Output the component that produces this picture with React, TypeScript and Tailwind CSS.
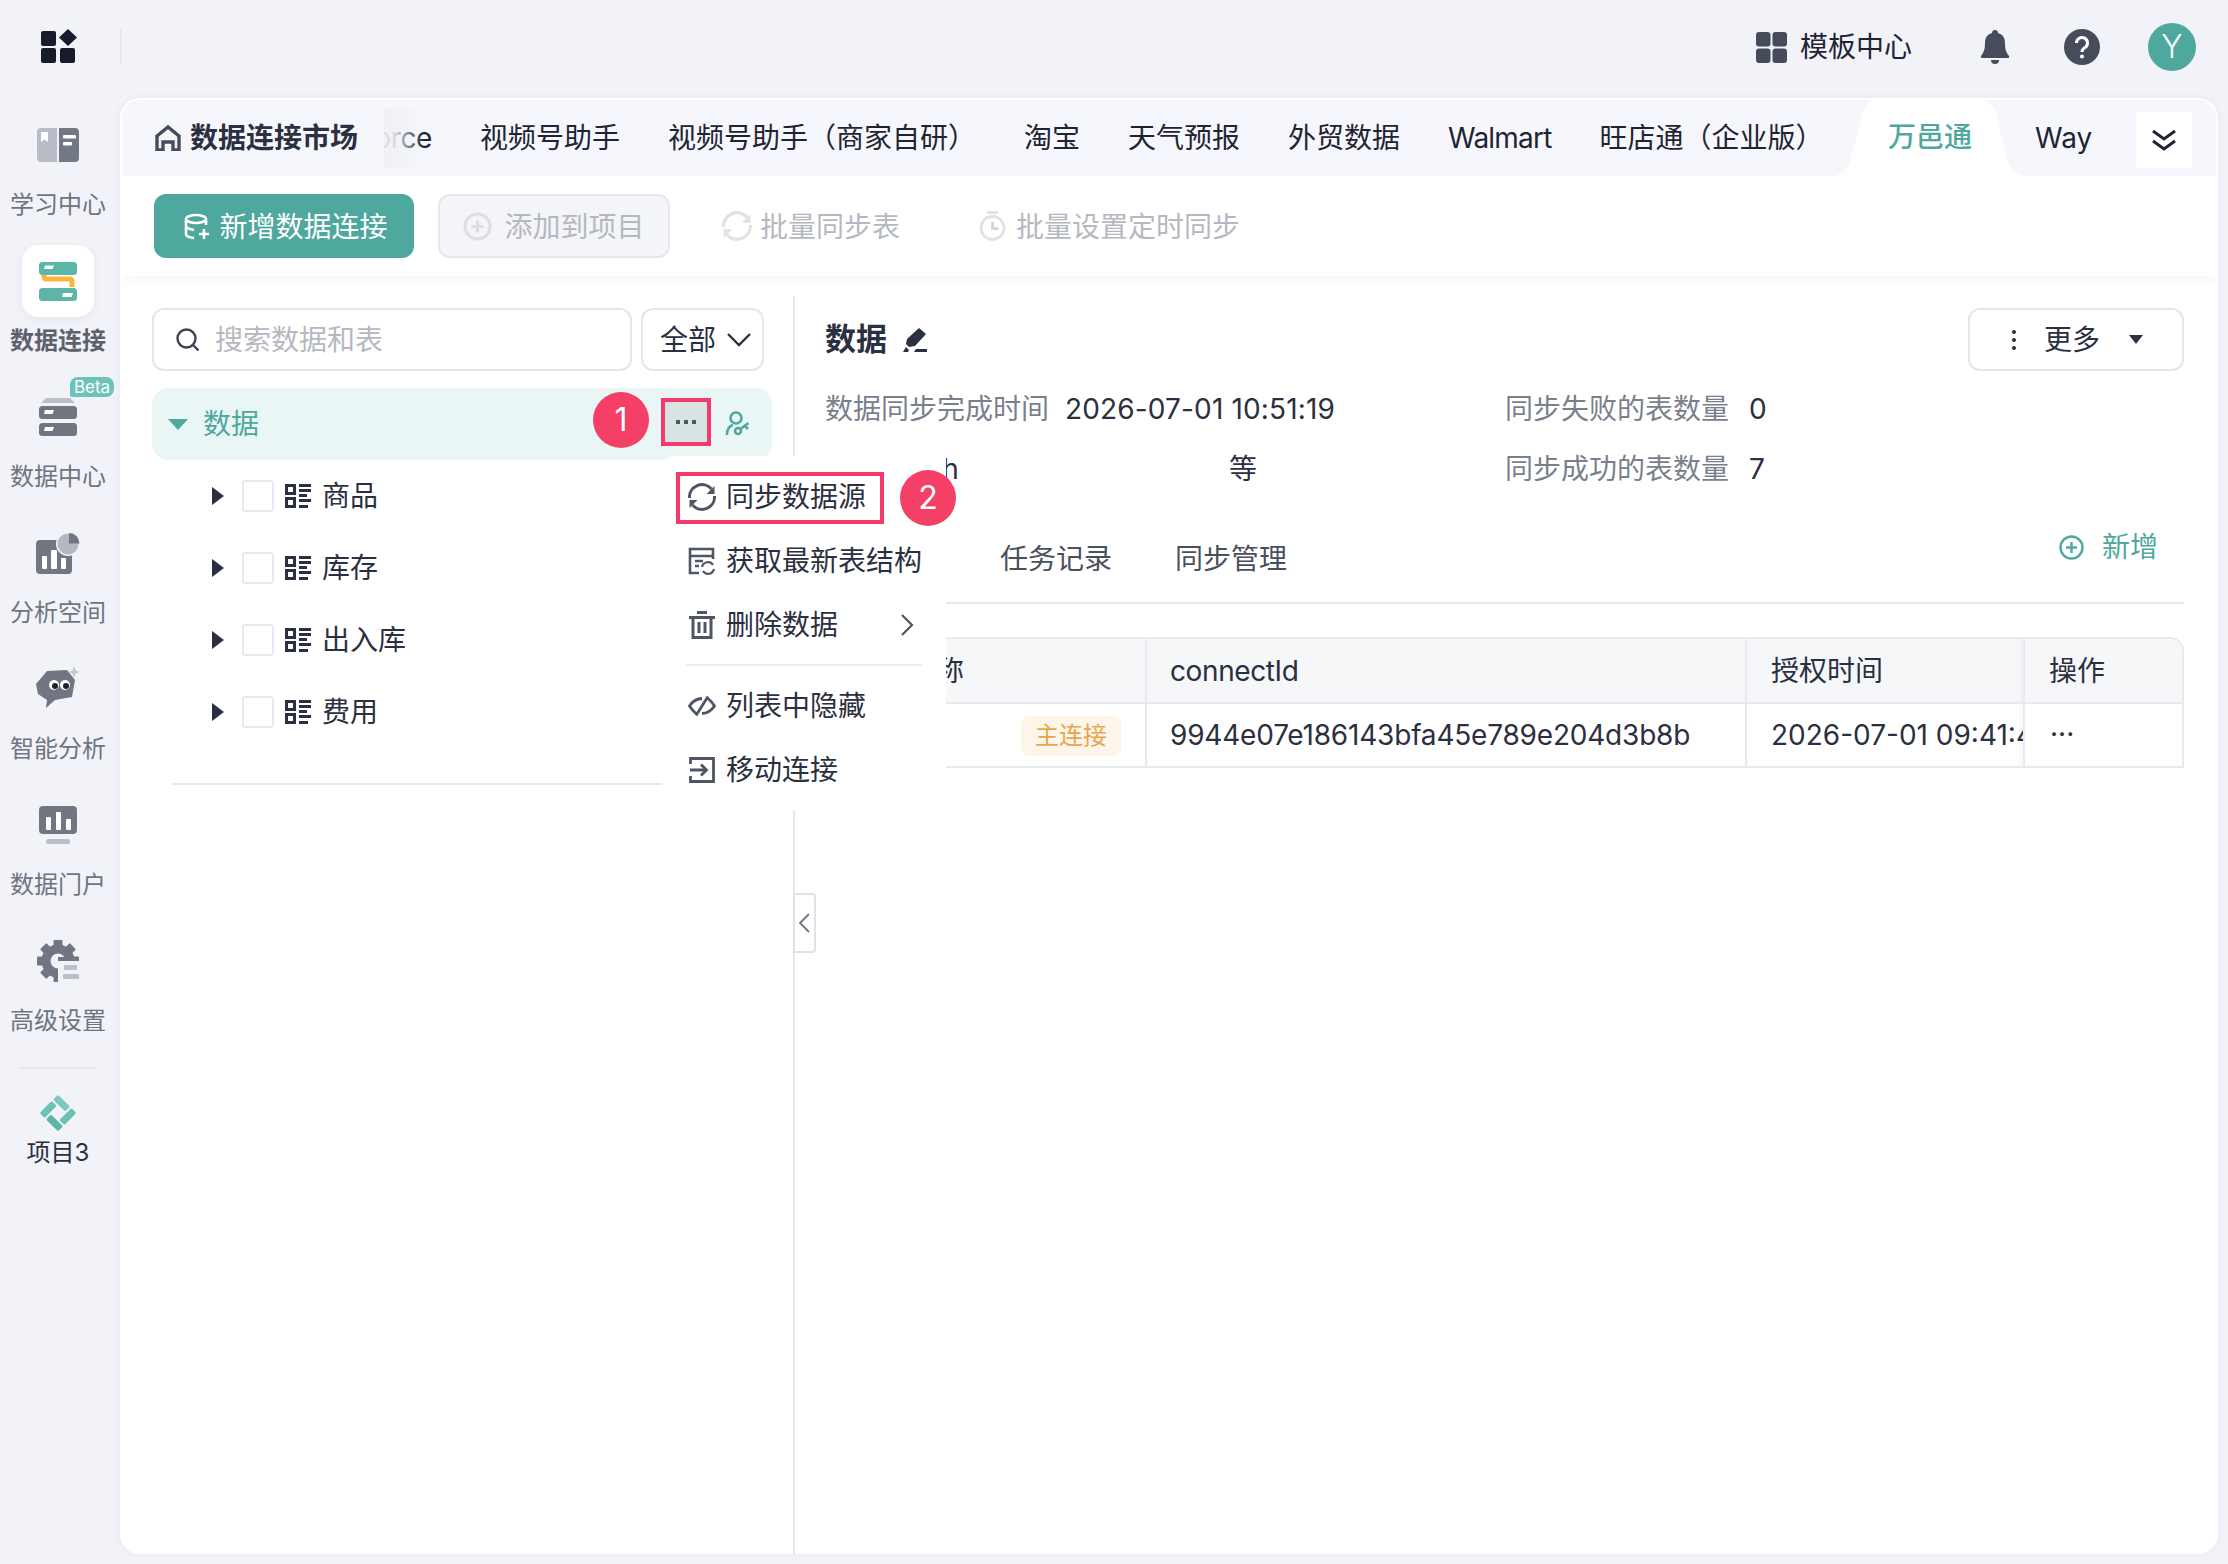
import type { ReactNode } from 'react';

const pinkBadge = 'absolute flex items-center justify-center w-[56px] h-[56px] rounded-full bg-[#f43f66] text-white text-[32px] leading-none';

function LearnIcon() {
  return (
    <svg width="42" height="34" viewBox="0 0 42 34">
      <path d="M4 0h16v34H4a4 4 0 0 1-4-4V4a4 4 0 0 1 4-4z" fill="#b9bcc6" />
      <path d="M22 0h16a4 4 0 0 1 4 4v26a4 4 0 0 1-4 4H22z" fill="#737885" />
      <path d="M4 4h7v10l-3.500-2.500L4 14z" fill="#fff" />
      <rect x="26" y="7" width="13" height="3.500" rx="1" fill="#fff" />
      <rect x="26" y="14" width="9" height="3.500" rx="1" fill="#fff" />
    </svg>
  );
}

function ConnectIcon() {
  return (
    <svg width="38" height="39" viewBox="0 0 38 39">
      <path d="M5 10v5a2 2 0 0 0 2 2h24a2 2 0 0 1 2 2v6" fill="none" stroke="#fbb53e" strokeWidth="5" />
      <rect x="0" y="0" width="38" height="13" rx="3.500" fill="#5db5a9" />
      <rect x="0" y="26" width="38" height="13" rx="3.500" fill="#5db5a9" />
      <path d="M6 3.500h9l-1.500 3.500H5z" fill="#fff" />
      <path d="M24 31h10l-1.500 4H23z" fill="#fff" />
    </svg>
  );
}

function DataCenterIcon() {
  return (
    <svg width="38" height="39" viewBox="0 0 38 39">
      <path d="M7 0h24l5 5H2z" fill="#bcbfc8" />
      <rect x="0" y="8" width="38" height="13" rx="3.500" fill="#717683" />
      <rect x="0" y="25" width="38" height="13" rx="3.500" fill="#717683" />
      <path d="M6 12h9l-1.500 4H5z" fill="#fff" />
      <path d="M6 29h9l-1.500 4H5z" fill="#fff" />
    </svg>
  );
}

function AnalysisIcon() {
  return (
    <svg width="44" height="42" viewBox="0 0 44 42">
      <rect x="0" y="8" width="36" height="34" rx="4" fill="#717683" />
      <circle cx="32" cy="12" r="12" fill="#f1f3f8" />
      <circle cx="32" cy="12" r="10.500" fill="#b4b8c2" />
      <path d="M33 1a10.500 10.500 0 0 1 10.500 10.500H33z" fill="#717683" />
      <rect x="6" y="24" width="5" height="13" rx="1" fill="#fff" />
      <rect x="15" y="18" width="6" height="19" rx="1" fill="#fff" />
      <rect x="25" y="26" width="5" height="11" rx="1" fill="#fff" />
    </svg>
  );
}

function SmartIcon() {
  return (
    <svg width="46" height="46" viewBox="0 0 46 46">
      <path d="M12 5l20-1 8 10-3 17-17 3-9 8 1-8-9-6-2-10z" fill="#717683" />
      <path d="M39 0l1.500 4.500L45 6l-4.500 1.500L39 12l-1.500-4.500L33 6l4.500-1.500z" fill="#c4c7cf" />
      <circle cx="19" cy="19" r="5" fill="#fff" />
      <circle cx="30" cy="19" r="5" fill="#fff" />
      <circle cx="20" cy="20" r="3" fill="#1c2030" />
      <circle cx="31" cy="20" r="3" fill="#1c2030" />
    </svg>
  );
}

function PortalIcon() {
  return (
    <svg width="38" height="38" viewBox="0 0 38 38">
      <rect x="0" y="0" width="38" height="28" rx="4" fill="#717683" />
      <rect x="7" y="33" width="24" height="5" rx="2.500" fill="#bcbfc8" />
      <rect x="7" y="11" width="5" height="13" rx="1" fill="#fff" />
      <rect x="17" y="6" width="5" height="18" rx="1" fill="#fff" />
      <rect x="27" y="13" width="5" height="11" rx="1" fill="#fff" />
    </svg>
  );
}

function SettingIcon() {
  return (
    <svg width="42" height="42" viewBox="0 0 42 42">
      {[0, 45, 90, 135, 180, 225, 270, 315].map((a) => (
        <rect key={a} x="16.500" y="0" width="9" height="9" rx="1" fill="#717683" transform={`rotate(${a} 21 21)`} />
      ))}
      <circle cx="21" cy="21" r="12" fill="none" stroke="#717683" strokeWidth="9" />
      <rect x="21" y="21" width="21" height="21" fill="#f1f3f8" />
      <rect x="21" y="17" width="21" height="4" fill="#717683" />
      <rect x="27" y="25" width="13" height="5" rx="1" fill="#bcbfc8" />
      <rect x="26" y="34" width="16" height="5" rx="1" fill="#bcbfc8" />
    </svg>
  );
}

function ProjectIcon() {
  return (
    <svg width="36" height="36" viewBox="0 0 36 36">
      <g transform="rotate(45 18 18)">
        <rect x="5" y="5" width="17" height="7" rx="1.500" fill="#7ccabf" />
        <rect x="24" y="5" width="7" height="17" rx="1.500" fill="#6cc1b5" />
        <rect x="14" y="24" width="17" height="7" rx="1.500" fill="#5db5a9" />
        <rect x="5" y="14" width="7" height="17" rx="1.500" fill="#6cc1b5" />
      </g>
    </svg>
  );
}

function SyncIcon({ size = 28, color = '#4f5564' }: { size?: number; color?: string }) {
  return (
    <svg width={size} height={size} viewBox="0 0 28 28" fill="none">
      <path d="M1.500 15a12.500 12.500 0 0 1 22-9" stroke={color} strokeWidth="3" />
      <path d="M26.500 13a12.500 12.500 0 0 1-22 9" stroke={color} strokeWidth="3" />
      <path d="M26.500 3v8h-8z" fill={color} />
      <path d="M1.500 25v-8h8z" fill={color} />
    </svg>
  );
}

function TreeIcon() {
  return (
    <svg width="26" height="24" viewBox="0 0 26 24" fill="#2b3040">
      <path d="M0 0h11v11H0zM3 3v5h5V3z" fillRule="evenodd" />
      <path d="M0 13h11v11H0zM3 16v5h5v-5z" fillRule="evenodd" />
      <rect x="14" y="0" width="12" height="3" />
      <rect x="14" y="5" width="12" height="3" />
      <rect x="14" y="10" width="8" height="3" />
      <rect x="14" y="15" width="12" height="3" />
      <rect x="14" y="21" width="9" height="3" />
    </svg>
  );
}

function Tree({ label }: { label: string }) {
  return (
    <div className="flex items-center h-[72px]">
      <span className="ml-[60px] w-0 h-0 border-y-[9px] border-y-transparent border-l-[12px] border-l-[#2b3040]" />
      <span className="ml-[18px] w-[32px] h-[32px] rounded-[4px] border-2 border-[#e8e9ee] bg-white" />
      <span className="ml-[11px]"><TreeIcon /></span>
      <span className="ml-[11px] text-[#2b3040]">{label}</span>
    </div>
  );
}

function SideItem({ icon, label, active, badge }: { icon: ReactNode; label: string; active?: boolean; badge?: boolean }) {
  return (
    <div className="relative flex flex-col items-center h-[136px] shrink-0">
      <div className={`w-[72px] h-[72px] flex items-center justify-center rounded-[16px] ${active ? 'bg-white shadow-[0_2px_8px_rgba(30,40,80,0.06)]' : ''}`}>
        {icon}
      </div>
      <div className={`h-[48px] leading-[48px] text-[24px] ${active ? 'font-bold text-[#5d616c]' : 'text-[#6f7480]'}`}>{label}</div>
      {badge && (
        <span className="absolute left-[70px] top-[-4px] w-[44px] h-[20px] rounded-[8px] rounded-bl-[2px] bg-[#6bc3b9] text-white text-[17px] leading-[20px] text-center">Beta</span>
      )}
    </div>
  );
}

function MenuItem({ icon, label, arrow, className = '' }: { icon: ReactNode; label: string; arrow?: boolean; className?: string }) {
  return (
    <div className={`flex items-center h-[64px] pl-[26px] text-[#2b3040] ${className}`}>
      <span className="w-[28px] h-[28px] flex items-center justify-center">{icon}</span>
      <span className="ml-[10px]">{label}</span>
      {arrow && (
        <svg className="ml-auto mr-[32px]" width="14" height="24" viewBox="0 0 14 24" fill="none">
          <path d="M2 2l10 10L2 22" stroke="#4f5564" strokeWidth="2.200" />
        </svg>
      )}
    </div>
  );
}

export default function App() {
  return (
    <div className="h-screen flex flex-col bg-[#f1f3f8] overflow-hidden text-[28px] font-['Inter','Noto_Sans_CJK_SC',sans-serif]">
      <header className="h-[98px] shrink-0 flex items-center">
        <svg className="ml-[41px] mb-[6px]" width="36" height="34" viewBox="0 0 36 34" fill="#161c2c">
          <rect x="0" y="2" width="15" height="15" rx="2" />
          <rect x="0" y="19" width="15" height="15" rx="2" />
          <rect x="19" y="19" width="15" height="15" rx="2" />
          <path d="M27 0l9 8.500-9 8.500-9-8.500z" />
        </svg>
        <span className="ml-[43px] mb-[6px] w-[2px] h-[34px] bg-[#e6e8ee]" />
        <div className="ml-auto flex items-center mb-[4px]">
          <svg width="31" height="31" viewBox="0 0 31 31" fill="#464c5b">
            <rect x="0" y="0" width="14.500" height="14.500" rx="3" />
            <rect x="16.500" y="0" width="14.500" height="14.500" rx="3" />
            <rect x="0" y="16.500" width="14.500" height="14.500" rx="3" />
            <rect x="16.500" y="16.500" width="14.500" height="14.500" rx="3" />
          </svg>
          <span className="ml-[13px] text-[#1f2433]">模板中心</span>
          <svg className="ml-[68px]" width="30" height="34" viewBox="0 0 30 34" fill="#464c5b">
            <path d="M15 0a3 3 0 0 1 3 3c5 1.500 7 5 7 10 0 6 1 9 4 13 .5 1 0 2-1 2H2c-1 0-1.500-1-1-2 3-4 4-7 4-13 0-5 2-8.500 7-10a3 3 0 0 1 3-3z" />
            <path d="M11 30h8a4 4 0 0 1-8 0z" />
          </svg>
          <svg className="ml-[54px]" width="36" height="36" viewBox="0 0 36 36">
            <circle cx="18" cy="18" r="18" fill="#464c5b" />
            <path d="M12.500 14a5.500 5.500 0 1 1 8.500 4.600c-2 1.300-3 2.200-3 4.400" fill="none" stroke="#fff" strokeWidth="3" />
            <circle cx="18" cy="27.500" r="2" fill="#fff" />
          </svg>
          <span className="ml-[48px] mr-[32px] w-[48px] h-[48px] rounded-full bg-[#4ea89d] text-white text-[32px] font-light flex items-center justify-center">Y</span>
        </div>
      </header>

      <div className="flex-1 flex min-h-0 pb-[10px]">
        <aside className="w-[120px] shrink-0 flex flex-col pt-[11px] pr-[4px]">
          <SideItem icon={<LearnIcon />} label="学习中心" />
          <SideItem icon={<ConnectIcon />} label="数据连接" active />
          <SideItem icon={<DataCenterIcon />} label="数据中心" badge />
          <SideItem icon={<AnalysisIcon />} label="分析空间" />
          <SideItem icon={<SmartIcon />} label="智能分析" />
          <SideItem icon={<PortalIcon />} label="数据门户" />
          <SideItem icon={<SettingIcon />} label="高级设置" />
          <div className="mx-[20px] h-[2px] bg-[#e6e8ee] mt-[6px]" />
          <div className="flex flex-col items-center mt-[26px]">
            <ProjectIcon />
            <span className="mt-[4px] text-[24px] leading-[36px] text-[#2b3040]">项目3</span>
          </div>
        </aside>

        <main className="w-[2098px] flex flex-col bg-white rounded-[20px] border-t-2 border-x-2 border-white overflow-hidden relative shadow-[0_0_8px_rgba(30,40,80,0.05)]">
          <nav className="h-[76px] shrink-0 flex items-stretch bg-[#f6f7fc] text-[#1f2433] relative">
            <div className="flex items-center pl-[33px] w-[262px] shrink-0">
              <svg width="26" height="26" viewBox="0 0 26 26" fill="none" stroke="#464c5b" strokeWidth="3.400">
                <path d="M2 25V11L13 2l11 9v14h-6v-8H8v8z" />
              </svg>
              <span className="ml-[9px] font-bold text-[#2b3040]">数据连接市场</span>
            </div>
            <div className="relative w-[96px] shrink-0 flex items-center justify-end pr-[48px] overflow-hidden">
              <span className="tracking-[-0.4px]">orce</span>
              <span className="absolute left-0 w-[40px] h-[60px] bg-gradient-to-r from-[#f0f1f5]/90 from-25% to-[#f0f1f5]/0" />
            </div>
            <div className="flex items-center gap-[48px] whitespace-nowrap">
              <span>视频号助手</span>
              <span>视频号助手（商家自研）</span>
              <span>淘宝</span>
              <span>天气预报</span>
              <span>外贸数据</span>
              <span className="tracking-[-0.8px]">Walmart</span>
              <span>旺店通（企业版）</span>
            </div>
            <svg className="absolute left-[1708px] top-[-2px]" width="196" height="78" viewBox="0 0 196 78" fill="#fff">
              <path d="M0 78C12 78 19 70 21 59L33 15C35 6 42 0 52 0L145 0C156 0 163 6 166 15L176 59C179 70 186 78 196 78Z" />
            </svg>
            <span className="absolute left-[1730px] top-[-2px] w-[156px] h-[78px] flex items-center justify-center text-[#4ea89d] font-medium">万邑通</span>
            <span className="absolute left-[1913px] top-[17px]">Way</span>
            <span className="absolute left-[1970px] top-[10px] w-[18px] h-[54px] bg-[#f6f7fc]" />
            <div className="absolute left-[2014px] top-[12px] w-[56px] h-[56px] bg-white rounded-[4px] flex items-center justify-center">
              <svg width="26" height="26" viewBox="0 0 26 26" fill="none" stroke="#1f2433" strokeWidth="3">
                <path d="M2 4l11 8 11-8" />
                <path d="M2 14l11 8 11-8" />
              </svg>
            </div>
          </nav>

          <div className="h-[100px] shrink-0 flex items-center pl-[32px] shadow-[0_4px_8px_rgba(30,40,80,0.04)] relative z-10 bg-white">
            <button className="w-[260px] h-[64px] rounded-[12px] bg-[#4ea89d] text-white flex items-center justify-center gap-[8px] pt-[1px]">
              <svg className="ml-[3px]" width="28" height="28" viewBox="0 0 28 28" fill="none" stroke="#fff" strokeWidth="2.600">
                <ellipse cx="13" cy="6" rx="10" ry="4" />
                <path d="M3 7v6c0 2 3 3 8 4M3 14v7c0 2 3 3.500 8 4M23 7v5" />
                <path d="M21 16v10M16 21h10" />
              </svg>
              <span>新增数据连接</span>
            </button>
            <button className="ml-[24px] w-[232px] h-[64px] rounded-[12px] bg-[#f4f5f8] border-2 border-[#e6e7ee] text-[#b5b8c0] flex items-center justify-center gap-[12px] pt-[1px]">
              <svg width="29" height="29" viewBox="0 0 29 29" fill="none" stroke="#dcdee3" strokeWidth="3">
                <circle cx="14.500" cy="14.500" r="12.500" />
                <path d="M14.500 8.500v12M8.500 14.500h12" />
              </svg>
              <span>添加到项目</span>
            </button>
            <span className="ml-[52px]"><SyncIcon size={30} color="#e0e2e6" /></span>
            <span className="ml-[8px] pt-[1px] text-[#b5b8c0]">批量同步表</span>
            <svg className="ml-[79px]" width="27" height="30" viewBox="0 0 27 30" fill="none" stroke="#e0e2e6" strokeWidth="2.800">
              <path d="M8 1.500h11" />
              <circle cx="13.500" cy="17" r="11.500" />
              <path d="M13.500 11v6.500h6" stroke="#d2d4da" />
            </svg>
            <span className="ml-[10px] pt-[1px] text-[#b5b8c0]">批量设置定时同步</span>
          </div>

          <div className="flex-1 flex min-h-0">
            <section className="w-[671px] shrink-0 pt-[32px] pl-[30px]">
              <div className="flex h-[63px] gap-[9px] pr-[28px]">
                <div className="w-[480px] flex items-center border-2 border-[#e4e6ec] rounded-[12px] pl-[22px]">
                  <svg width="24" height="24" viewBox="0 0 24 24" fill="none" stroke="#3c4252" strokeWidth="2.400">
                    <circle cx="10.500" cy="10.500" r="9" />
                    <path d="M17 17l5.500 5.500" />
                  </svg>
                  <span className="ml-[15px] pt-[1px] text-[#b5b8c0]">搜索数据和表</span>
                </div>
                <div className="w-[123px] flex items-center border-2 border-[#e4e6ec] rounded-[12px] pl-[17px] text-[#2b3040]">
                  <span className="pt-[1px]">全部</span>
                  <svg className="ml-[10px]" width="26" height="15" viewBox="0 0 26 15" fill="none" stroke="#2b3040" strokeWidth="2.400">
                    <path d="M2 2l11 11L24 2" />
                  </svg>
                </div>
              </div>
              <div className="mt-[17px] h-[72px] w-[620px] rounded-[16px] bg-[#eaf6f5] flex items-center text-[#4ea89d] relative">
                <span className="ml-[16px] w-0 h-0 border-x-[10px] border-x-transparent border-t-[11px] border-t-[#4ea89d]" />
                <span className="ml-[15px]">数据</span>
                <span className={`${pinkBadge} left-[441px] top-[4px]`}>1</span>
                <span className="absolute left-[509px] top-[10px] w-[50px] h-[48px] border-[4px] border-[#f43a6b] bg-[#d8e3e3] flex items-center justify-center gap-[4px]">
                  <i className="w-[4px] h-[4px] bg-[#4f5564]" />
                  <i className="w-[4px] h-[4px] bg-[#4f5564]" />
                  <i className="w-[4px] h-[4px] bg-[#4f5564]" />
                </span>
                <svg className="absolute left-[573px] top-[23px]" width="26" height="26" viewBox="0 0 26 26" fill="none" stroke="#4ea89d" strokeWidth="2.600">
                  <circle cx="11" cy="7" r="5.500" />
                  <path d="M2 24c0-5 2-9 6-10" />
                  <circle cx="13" cy="20" r="3" />
                  <path d="M15.500 18l8-6M20 15l3 3" />
                </svg>
              </div>
              <Tree label="商品" />
              <Tree label="库存" />
              <Tree label="出入库" />
              <Tree label="费用" />
              <div className="mt-[35px] ml-[20px] w-[590px] h-[2px] bg-[#e6e8ee]" />
            </section>

            <section className="relative flex-1 mt-[20px] border-l-2 border-[#e6e7ee] pl-[30px] pr-[32px]">
              <div className="absolute left-[-2px] top-[597px] w-[23px] h-[60px] border-2 border-[#dfe2e8] rounded-r-[4px] bg-white flex items-center justify-center">
                <svg width="11" height="20" viewBox="0 0 11 20" fill="none" stroke="#6f7480" strokeWidth="1.800">
                  <path d="M10 1L1 10l9 9" />
                </svg>
              </div>
              <div className="flex items-start pt-[12px] h-[83px]">
                <div className="flex items-center h-[62px]">
                  <span className="text-[31px] font-bold text-[#2b3040]">数据</span>
                  <svg className="ml-[16px]" width="25" height="25" viewBox="0 0 25 25" fill="#2b3040">
                    <path d="M16 1l7 6-11 12-6 1-3-3 1-5zM0 25l3-5 3 3-1 2zM13 22h11v3H11z" />
                  </svg>
                </div>
                <div className="ml-auto w-[216px] h-[63px] border-2 border-[#e4e6ec] rounded-[12px] flex items-center pl-[42px] text-[#2b3040]">
                  <svg width="4" height="20" viewBox="0 0 4 20" fill="#2b3040">
                    <circle cx="2" cy="2" r="2" />
                    <circle cx="2" cy="10" r="2" />
                    <circle cx="2" cy="18" r="2" />
                  </svg>
                  <span className="ml-[28px]">更多</span>
                  <span className="ml-[29px] w-0 h-0 border-x-[7px] border-x-transparent border-t-[9px] border-t-[#2b3040]" />
                </div>
              </div>
              <div className="grid grid-cols-[680px_1fr]">
                <div className="h-[60px] flex items-center">
                  <span className="text-[#7a7f8c] w-[240px]">数据同步完成时间</span>
                  <span className="text-[#2b3040] tracking-[0.15px]">2026-07-01 10:51:19</span>
                </div>
                <div className="h-[60px] flex items-center">
                  <span className="text-[#7a7f8c] w-[244px]">同步失败的表数量</span>
                  <span className="text-[#2b3040]">0</span>
                </div>
                <div className="h-[60px] flex items-center">
                  <span className="text-[#2b3040] w-[404px]">Main Auth</span>
                  <span className="text-[#2b3040]">等</span>
                </div>
                <div className="h-[60px] flex items-center">
                  <span className="text-[#7a7f8c] w-[244px]">同步成功的表数量</span>
                  <span className="text-[#2b3040]">7</span>
                </div>
              </div>
              <div className="h-[105px] border-b-2 border-[#e6e7ee] relative flex items-center gap-[63px] pt-[16px] text-[#4a4f5c]">
                <span>基础信息</span>
                <span>任务记录</span>
                <span>同步管理</span>
                <div className="absolute right-[26px] top-[27px] flex items-center text-[#4ea89d]">
                  <svg width="25" height="25" viewBox="0 0 25 25" fill="none" stroke="#4ea89d" strokeWidth="2.400">
                    <circle cx="12.500" cy="12.500" r="11" />
                    <path d="M12.500 7v11M7 12.500h11" />
                  </svg>
                  <span className="ml-[18px]">新增</span>
                </div>
              </div>
              <div className="mt-[33px] border-2 border-[#e8eaef] rounded-t-[14px] overflow-hidden text-[#2b3040]">
                <div className="flex h-[65px] bg-[#f6f7f9] border-b-2 border-[#e8eaef] items-center">
                  <span className="w-[320px] pl-[25px] h-full flex items-center border-r-2 border-[#e8eaef]">连接名称</span>
                  <span className="w-[600px] pl-[23px] h-full flex items-center border-r-2 border-[#e8eaef] tracking-[-0.4px]">connectId</span>
                  <span className="w-[278px] pl-[24px] h-full flex items-center border-r-2 border-[#e8eaef] shadow-[inset_-8px_0_8px_-8px_rgba(30,40,80,0.08)]">授权时间</span>
                  <span className="pl-[24px]">操作</span>
                </div>
                <div className="flex h-[62px] items-center">
                  <span className="w-[320px] pl-[25px] h-full flex items-center border-r-2 border-[#e8eaef]">
                    万邑通
                    <span className="ml-auto mr-[24px] mt-[2px] w-[100px] h-[40px] rounded-[8px] bg-[#fdf5e9] text-[#e8a64c] text-[24px] flex items-center justify-center">主连接</span>
                  </span>
                  <span className="w-[600px] pl-[23px] h-full flex items-center border-r-2 border-[#e8eaef] tracking-[-0.2px]">9944e07e186143bfa45e789e204d3b8b</span>
                  <span className="w-[278px] pl-[24px] h-full flex items-center border-r-2 border-[#e8eaef] overflow-hidden whitespace-nowrap shadow-[inset_-8px_0_8px_-8px_rgba(30,40,80,0.08)]">2026-07-01 09:41:43</span>
                  <span className="pl-[25px] pb-[3px]">···</span>
                </div>
              </div>
            </section>
          </div>

          <div className="absolute left-[540px] top-[356px] w-[284px] h-[354px] bg-white rounded-tl-[12px] z-20">
            <div className="pt-[9px]">
              <MenuItem icon={<SyncIcon />} label="同步数据源" />
              <MenuItem icon={
                <svg width="28" height="28" viewBox="0 0 28 28" fill="none" stroke="#4f5564" strokeWidth="2.600">
                  <path d="M11 26H2V2h23v10M2 9h23M7 14h8M7 19h4" />
                  <path d="M14 20a6 6 0 0 1 11-2M26 22a6 6 0 0 1-11 2" strokeWidth="2.200" />
                </svg>
              } label="获取最新表结构" />
              <MenuItem icon={
                <svg width="26" height="28" viewBox="0 0 26 28" fill="none" stroke="#4f5564" strokeWidth="3">
                  <path d="M0 6.500h26M8 1.500h10M4 7v19.500h18V7M10 11v11M16 11v11" />
                </svg>
              } label="删除数据" arrow />
              <div className="mx-[24px] mt-[7px] h-[2px] bg-[#ecedf2]" />
              <MenuItem className="mt-[8px]" icon={
                <svg width="28" height="22" viewBox="0 0 28 22" fill="none" stroke="#4f5564" strokeWidth="2.800">
                  <path d="M8 18.500C5.500 16.500 3.500 14 1.500 11 4.500 6.500 9 3.500 14 3.500M20 3.500C22.500 5.500 24.500 8 26.500 11 23.500 15.500 19 18.500 14 18.500M20 1.500L8 20.500" />
                </svg>
              } label="列表中隐藏" />
              <MenuItem icon={
                <svg width="26" height="26" viewBox="0 0 26 26" fill="none" stroke="#4f5564" strokeWidth="2.800">
                  <path d="M1.500 7V1.500h23v23h-23V19M1 13h15" />
                  <path d="M12 7.500l5.500 5.500-5.500 5.500" />
                </svg>
              } label="移动连接" />
            </div>
          </div>
          <div className="absolute left-[554px] top-[372px] w-[208px] h-[52px] border-[4px] border-[#f43a6b] z-30" />
          <span className={`${pinkBadge} left-[778px] top-[370px] z-30`}>2</span>
        </main>
      </div>
    </div>
  );
}
